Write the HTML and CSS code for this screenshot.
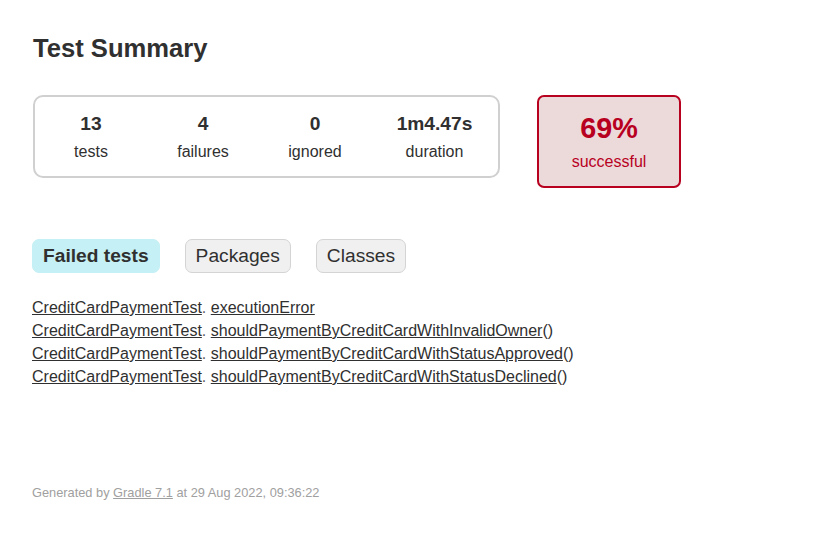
FILE: index.html
```html
<!DOCTYPE html>
<html>
<head>
<meta charset="utf-8">
<title>Test results - Test Summary</title>
<link rel="stylesheet" href="styles.css">
</head>
<body>
<div class="content">
  <h1 class="title">Test Summary</h1>
  <div class="summary">
    <div class="summary-group">
      <div class="info-box">
        <div class="counter">13</div>
        <p class="label">tests</p>
      </div>
      <div class="info-box">
        <div class="counter">4</div>
        <p class="label">failures</p>
      </div>
      <div class="info-box">
        <div class="counter">0</div>
        <p class="label">ignored</p>
      </div>
      <div class="info-box info-box-wide">
        <div class="counter">1m4.47s</div>
        <p class="label">duration</p>
      </div>
    </div>
    <div class="success-rate">
      <div class="percent">69%</div>
      <p class="label">successful</p>
    </div>
  </div>
  <ul class="tab-links">
    <li class="tab tab-selected"><a href="#tab0">Failed tests</a></li>
    <li class="tab"><a href="#tab1">Packages</a></li>
    <li class="tab"><a href="#tab2">Classes</a></li>
  </ul>
  <ul class="link-list">
    <li class="link-item"><a class="link" href="#">CreditCardPaymentTest</a><span class="dot">.</span> <a class="link" href="#">executionError</a></li>
    <li class="link-item"><a class="link" href="#">CreditCardPaymentTest</a><span class="dot">.</span> <a class="link" href="#">shouldPaymentByCreditCardWithInvalidOwner</a>()</li>
    <li class="link-item"><a class="link" href="#">CreditCardPaymentTest</a><span class="dot">.</span> <a class="link" href="#">shouldPaymentByCreditCardWithStatusApproved</a>()</li>
    <li class="link-item"><a class="link" href="#">CreditCardPaymentTest</a><span class="dot">.</span> <a class="link" href="#">shouldPaymentByCreditCardWithStatusDeclined</a>()</li>
  </ul>
  <div class="footer">
    <p class="footer-text">Generated by <a class="footer-link" href="#">Gradle 7.1</a> at 29 Aug 2022, 09:36:22</p>
  </div>
</div>
</body>
</html>
```

FILE: styles.css
```css
html, body {
  margin: 0;
  padding: 0;
}
body {
  font-family: "Liberation Sans", Arial, sans-serif;
  font-size: 16px;
  color: #303030;
  background: #ffffff;
}
a, a:visited {
  color: #303030;
}
.content {
  padding: 16px 32px 30px 32px;
}
.title {
  font-size: 25.6px;
  font-weight: bold;
  margin: 18px 0 0 1px;
  line-height: 29px;
}
.summary {
  display: flex;
  align-items: flex-start;
  margin-top: 32px;
  padding-left: 1px;
}
.summary-group {
  display: flex;
  border: 2px solid #d0d0d0;
  border-radius: 10px;
  padding: 0 1px;
  gap: 2px;
}
.info-box {
  width: 110px;
  padding: 16px 0 15px;
  text-align: center;
}
.info-box-wide {
  width: 125px;
}
.counter {
  font-size: 19.2px;
  font-weight: bold;
  line-height: 22px;
  margin-bottom: 8px;
}
.label {
  margin: 0;
  line-height: 18px;
}
.success-rate {
  width: 140px;
  margin-left: 37px;
  padding: 15px 0 15px;
  text-align: center;
  border: 2px solid #b8001f;
  border-radius: 7px;
  background: #ecdada;
  color: #b8001f;
}
.percent {
  font-size: 28.8px;
  font-weight: bold;
  line-height: 33px;
  margin-bottom: 8px;
}
.tab-links {
  display: flex;
  list-style: none;
  margin: 51px 0 0 0;
  padding: 0 0 10px 0;
  gap: 25px;
}
.tab {
  padding: 5px 10px;
  border: 1px solid #d4d4d4;
  border-radius: 7px;
  background: #f0f0f0;
}
.tab a {
  display: block;
  font-size: 19.2px;
  line-height: 22px;
  text-decoration: none;
}
.tab-selected {
  background: #c5f0f5;
  border-color: #c5f0f5;
}
.tab-selected a {
  font-weight: bold;
}
.link-list {
  list-style: none;
  margin: 16px 0 0 0;
  padding: 0;
}
.link-item {
  margin-bottom: 5px;
  line-height: 18px;
}
.dot {
  color: #606060;
}
.footer {
  margin-top: 99px;
}
.footer-text {
  margin: 0;
  font-size: 12.8px;
  color: #a0a0a0;
  white-space: nowrap;
}
.footer-link, .footer-link:visited {
  color: #a0a0a0;
}
```
